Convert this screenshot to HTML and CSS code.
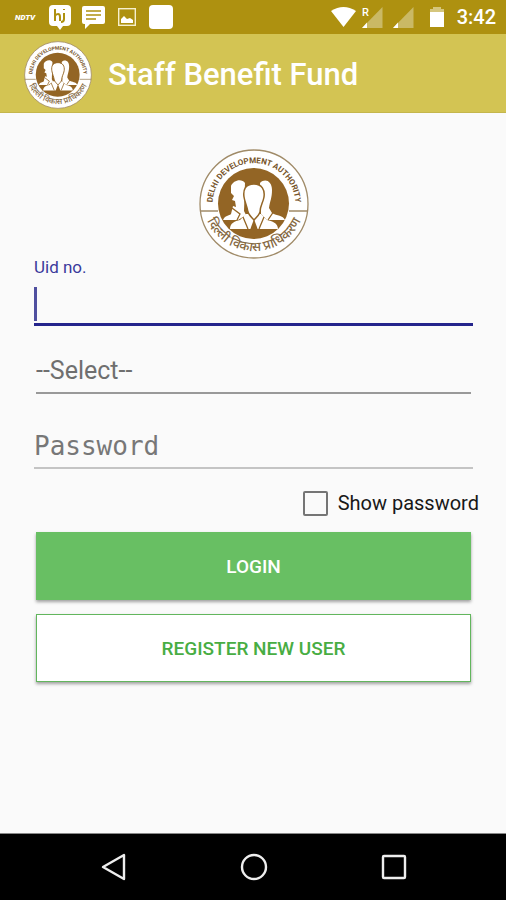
FILE: index.html
```html
<!DOCTYPE html>
<html lang="en">
<head>
<meta charset="utf-8">
<meta name="viewport" content="width=device-width, initial-scale=1">
<title>Staff Benefit Fund</title>
<link rel="stylesheet" href="styles.css">
</head>
<body>
<div class="screen">
  <div class="status">
    <div class="notices">
      <span class="ndtv">NDTV</span>
      <svg width="22" height="26" viewBox="0 0 22 26"><path d="M4 1H18Q22 1 22 5V18Q22 22 18 22H14L11 26L8 22H4Q0 22 0 18V5Q0 1 4 1Z" fill="#fff"/><path d="M6 5V17M6 12Q7 10 9 10T11 13V17M15 9V15Q15 18 12 18M15 5V6" fill="none" stroke="#ae9110" stroke-width="2"/></svg>
      <svg class="chat" width="23" height="23" viewBox="0 0 23 23"><path d="M2 0H21Q23 0 23 2V16Q23 18 21 18H8L3 23V18H2Q0 18 0 16V2Q0 0 2 0Z" fill="#fff"/><path d="M4 5H19M4 9H19M4 13H14" stroke="#ae9110" stroke-width="1.500"/></svg>
      <svg class="photo" width="18" height="18" viewBox="0 0 18 18"><rect x=".7" y=".7" width="16.600" height="16.600" fill="none" stroke="#f6efcd" stroke-width="1.400"/><path d="M3 15V11L6 8L9 11L12 10L15 12V15Z" fill="#fff"/></svg>
      <span class="tile"></span>
    </div>
    <div class="system">
      <svg class="wifi" width="25" height="20" viewBox="0 0 25 20"><path d="M0 4Q12.500 -4 25 4L12.500 20Z" fill="#fff"/></svg>
      <svg width="22" height="22" viewBox="0 0 22 22"><path d="M21.500 1V22H1Z" fill="#cab965"/><path d="M1 22L6 16.500V22Z" fill="#fff"/><text class="roam" x="1" y="10">R</text></svg>
      <svg width="22" height="22" viewBox="0 0 22 22"><path d="M21.500 1V22H1Z" fill="#cab965"/><path d="M1 22L6 16.500V22Z" fill="#fff"/></svg>
      <svg class="battery" width="14" height="20" viewBox="0 0 14 20"><path d="M0 2H3V0H11V2H14V6H0Z" fill="#d5c67d"/><path d="M0 5H14V20H0Z" fill="#fff"/></svg>
      <time>3:42</time>
    </div>
  </div>

  <header class="appbar">
    <svg class="emblem-small" viewBox="0 0 110 110" role="img" aria-label="Delhi Development Authority">
      <g id="emblem">
        <circle cx="55" cy="55" r="54" fill="#fff" stroke="#a08b68" stroke-width="1.3"/>
        <path id="arc-top" d="M14 62A41.500 41.500 0 1 1 96 62" fill="none"/>
        <path id="arc-bottom" d="M4 52A51 50 0 0 0 106 52" fill="none"/>
        <circle cx="54.500" cy="54.500" r="35.500" fill="#936525"/>
        <path d="M1 62H19M90 62H109" stroke="#a08b68" stroke-width="1.300"/>
        <g fill="#fff">
          <path d="M34 57L37 58L36 52L33 51L35 47L32 44V37C34 31 43 29 46 34L45 62L47 66L39 71H24C26 66 30 67 32 65Z"/>
          <path d="M61 34C66 29 73 32 73 41C73 49 71 52 70 59L73 64C78 67 84 66 86 71H68L62 65Z"/>
          <path d="M31 80C31 74 36 72 41 71L47 65H62L68 71C73 72 79 74 79 80Z"/>
        </g>
        <path d="M33 59L41 65L38 71M75 62L69 71" fill="none" stroke="#936525" stroke-width="1.300"/>
        <path d="M44 68L49 80M65 68L60 80" fill="none" stroke="#936525" stroke-width="1.300"/>
        <path d="M55 70L51 81H59Z" fill="#936525"/>
        <path d="M55 35C46 35 44 41 45 48C46 54 48 57 49 63C50 66 53 69 55 71C57 69 60 66 61 63C61 57 64 54 65 48C66 41 63 35 55 35Z" fill="#fff" stroke="#936525" stroke-width="1.500"/>
        <text class="seal-en" text-anchor="middle"><textPath href="#arc-top" startOffset="50%">DELHI DEVELOPMENT AUTHORITY</textPath></text>
        <text class="seal-hi" text-anchor="middle"><textPath href="#arc-bottom" startOffset="50%">दिल्ली विकास प्राधिकरण</textPath></text>
      </g>
    </svg>
    <h1>Staff Benefit Fund</h1>
  </header>

  <main>
    <svg class="emblem-large" viewBox="0 0 110 110" role="img" aria-label="Delhi Development Authority"><use href="#emblem"/></svg>
    <form>
      <label class="uid-label" for="uid">Uid no.</label>
      <input class="field uid" id="uid" type="text">
      <select class="field picker" aria-label="User type"><option>--Select--</option></select>
      <input class="field password" type="password" placeholder="Password" aria-label="Password">
      <label class="show"><input type="checkbox">Show password</label>
      <button class="btn login" type="submit">LOGIN</button>
      <button class="btn register" type="button">REGISTER NEW USER</button>
    </form>
  </main>

  <nav class="navbar">
    <button type="button" aria-label="Back"><svg width="28" height="28" viewBox="0 0 28 28"><path d="M3 14L24 2V26Z"/></svg></button>
    <button type="button" aria-label="Home"><svg width="28" height="28" viewBox="0 0 28 28"><circle cx="14" cy="14" r="12"/></svg></button>
    <button type="button" aria-label="Recent apps"><svg width="28" height="28" viewBox="0 0 28 28"><rect x="3" y="3" width="22" height="22" rx="1"/></svg></button>
  </nav>
</div>
</body>
</html>
```
FILE: styles.css
```css
* { box-sizing: border-box; }
body {
  margin: 0;
  background: #fafafa;
  font-family: Roboto, "Liberation Sans", sans-serif;
}
svg { display: block; flex: none; }
.screen { display: flex; flex-direction: column; min-height: 100vh; }

.status {
  display: flex;
  justify-content: space-between;
  height: 34px;
  padding: 0 10px 0 15px;
  background: #ae9110;
  color: #fff;
}
.notices, .system { display: flex; align-items: center; }
.notices { gap: 11px; }
.ndtv { width: 23px; font-size: 8px; font-weight: 900; font-style: italic; }
.photo { margin: 0 2px; }
.tile { width: 24px; height: 24px; border-radius: 4px; background: #fff; }
.system { gap: 9px; }
.wifi { margin-right: -4px; }
.battery { margin: 0 4px 0 7px; }
.roam { font-size: 11px; font-weight: 500; fill: #fff; }
time { font-size: 20px; font-weight: 500; }

.appbar {
  display: flex;
  align-items: center;
  gap: 16px;
  height: 79px;
  padding: 3px 24px 0;
  background: #d3c453;
  border-bottom: 1px solid #c4b64c;
}
.emblem-small { width: 68px; height: 68px; }
h1 { margin: 0; color: #fff; font-size: 31px; font-weight: 500; }
.seal-en { fill: #76542a; font: 700 8px Roboto, sans-serif; }
.seal-hi { fill: #84683f; font: 500 13px "Noto Sans", "Noto Sans Devanagari", sans-serif; }

main { flex: 1; padding: 36px 33px 0 34px; }
.emblem-large { width: 110px; height: 110px; margin: 0 auto; }
form { display: flex; flex-direction: column; }
.uid-label { color: #3a3a9c; font-size: 17px; line-height: 17px; }
.field {
  width: 100%;
  margin: 0;
  padding: 0;
  border: 0;
  border-radius: 0;
  outline: 0;
  background: transparent;
  appearance: none;
  color: #6f6f6f;
}
.uid {
  height: 50px;
  border-bottom: 3px solid #24248c;
  background: linear-gradient(#4f4f9f, #4f4f9f) 0 11px / 3px 34px no-repeat;
  caret-color: #4f4f9f;
  font-size: 25px;
}
.picker {
  width: auto;
  height: 46px;
  margin: 22px 2px 0;
  border-bottom: 2px solid #999;
  font-family: inherit;
  font-size: 25px;
}
.password {
  height: 45px;
  margin-top: 30px;
  border-bottom: 2px solid #c4c4c4;
  font-family: "DejaVu Sans Mono", monospace;
  font-size: 26px;
}
.password::placeholder { color: #777; opacity: 1; }
.show {
  display: flex;
  align-items: center;
  align-self: flex-end;
  gap: 10px;
  height: 26px;
  margin: 21px -6px 0 0;
  color: #181818;
  font-size: 20px;
}
.show input {
  appearance: none;
  width: 25px;
  height: 25px;
  margin: 0;
  border: 2px solid #757575;
  border-radius: 2px;
}
.show input:checked { background: #68bf63; }
.btn {
  height: 68px;
  margin: 16px 2px 0;
  border: 0;
  box-shadow: 0 2px 3px #0000005c;
  font: 500 19px Roboto, sans-serif;
}
.login { background: #68bf63; color: #fff; }
.register { margin-top: 14px; border: 1px solid #62b65d; background: #fff; color: #48ad43; }

.navbar {
  display: flex;
  justify-content: center;
  align-items: center;
  gap: 112px;
  height: 67px;
  padding-left: 1px;
  border-top: 1px solid #888;
  background: #000;
}
.navbar button { padding: 0; border: 0; background: none; }
.navbar svg { fill: none; stroke: #eee; stroke-width: 2.4; stroke-linejoin: round; }
```
